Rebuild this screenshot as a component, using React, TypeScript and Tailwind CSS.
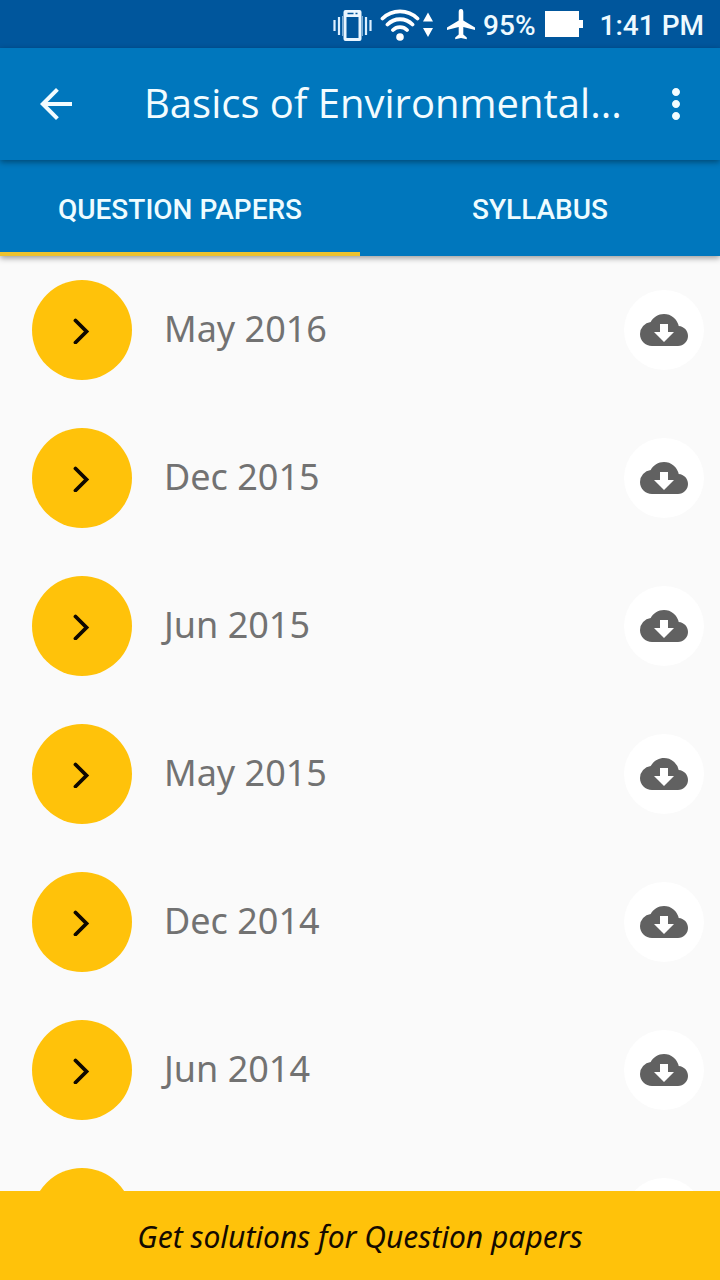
import { useState } from "react";
import { MdArrowBack, MdCloudDownload, MdMoreVert } from "react-icons/md";

const papers = [
  { id: 1, title: "May 2016" },
  { id: 2, title: "Dec 2015" },
  { id: 3, title: "Jun 2015" },
  { id: 4, title: "May 2015" },
  { id: 5, title: "Dec 2014" },
  { id: 6, title: "Jun 2014" },
  { id: 7, title: "" },
];

const tabs = ["QUESTION PAPERS", "SYLLABUS"];

function VibrateIcon() {
  return (
    <svg width="39" height="36" viewBox="0 0 39 36" aria-hidden="true">
      <path d="M1.500 14v11M6 11v18M33 11v18M37.500 14v11" stroke="#dcefff" strokeWidth="2.200" />
      <path d="M9.500 10v20M29.500 10v20" stroke="#7fb0d8" strokeWidth="1" />
      <rect x="12" y="5.500" width="15" height="28" rx="0.500" fill="none" stroke="#eaf6ff" strokeWidth="3" />
      <path d="M12 8h15" stroke="#eaf6ff" strokeWidth="6" />
      <path d="M14.500 7.500h6M22.500 7.500h2" stroke="#00569c" strokeWidth="1.500" />
    </svg>
  );
}

function WifiIcon() {
  return (
    <svg width="55" height="36" viewBox="0 0 55 36" fill="none" stroke="#fff" aria-hidden="true">
      <path
        d="M2.500 12.500a25 25 0 0 1 35 0M7.500 18.500a17.500 17.500 0 0 1 25 0M13 24a10 10 0 0 1 14 0"
        strokeWidth="3.800"
        strokeLinecap="round"
      />
      <circle cx="20" cy="31" r="3.800" fill="#fff" stroke="none" />
      <path d="M48 6.500l5 9H43zM48 31l5-9H43z" fill="#fff" stroke="none" />
    </svg>
  );
}

function PlaneIcon() {
  return (
    <svg width="28" height="36" viewBox="0 0 28 36" fill="#fff" aria-hidden="true">
      <path d="M14 3c1.600 0 2.300 1.200 2.300 3v8.500L28 21.500v2.500l-11.700-3v7.500l3.500 3v1.800L14 32l-5.800 1.300v-1.800l3.500-3V21L0 24v-2.500l11.700-7V6c0-1.800.7-3 2.300-3z" />
    </svg>
  );
}

function StatusBar() {
  return (
    <div className="flex h-12 shrink-0 items-center justify-end bg-[#00569c] pr-4 font-[Roboto,sans-serif] text-[28px] font-medium text-[#eefaff]">
      <VibrateIcon />
      <span className="ml-2">
        <WifiIcon />
      </span>
      <span className="ml-3">
        <PlaneIcon />
      </span>
      <span className="ml-2 pt-1">95%</span>
      <svg className="ml-2" width="40" height="28" viewBox="0 0 40 28" fill="#fff" aria-hidden="true">
        <path d="M1 1h34v9h4v8h-4v9H1z" />
      </svg>
      <span className="ml-4 pt-1">1:41 PM</span>
    </div>
  );
}

function PaperRow({ title }: { title: string }) {
  return (
    <li className="flex items-center py-6 pr-4 pl-8">
      <button
        aria-label={`Open ${title}`}
        className="flex size-[100px] shrink-0 items-center justify-center rounded-full bg-[#ffc20a]"
      >
        <svg width="20" height="28" viewBox="0 0 20 28" fill="none" aria-hidden="true">
          <path d="M3.500 4.500L14.500 15.500L3.500 26.500" stroke="#0f0800" strokeWidth="3.800" strokeLinecap="round" />
        </svg>
      </button>
      <span className="ml-8 flex-1 pb-0.5 text-4xl text-[#727272]">{title}</span>
      <button
        aria-label={`Download ${title}`}
        className="flex size-20 shrink-0 items-center justify-center rounded-full bg-white"
      >
        <MdCloudDownload className="size-12 text-[#616161]" />
      </button>
    </li>
  );
}

export default function App() {
  const [active, setActive] = useState(0);

  return (
    <div className="flex h-screen flex-col bg-[#fafafa] font-['Noto_Sans',sans-serif]">
      <StatusBar />

      <header className="z-20 flex h-28 shrink-0 items-center bg-[#0077bd] px-8 text-[#f2fcff] shadow-[0_2px_6px_rgba(0,0,0,0.4)]">
        <button aria-label="Back">
          <MdArrowBack className="size-12" />
        </button>
        <h1 className="ml-16 min-w-0 flex-1 truncate pb-0.5 font-['Open_Sans',sans-serif] text-[40px]">
          Basics of Environmental...
        </h1>
        <button aria-label="More options" className="-mr-3">
          <MdMoreVert className="size-12" />
        </button>
      </header>

      <nav className="z-10 flex h-24 shrink-0 bg-[#0077bd] font-[Roboto,sans-serif] shadow-[0_2px_6px_rgba(0,0,0,0.4)]">
        {tabs.map((tab, i) => (
          <button
            key={tab}
            onClick={() => setActive(i)}
            className={`flex-1 border-b-4 pt-2 text-[28px] font-medium text-[#eefcff] ${
              active === i ? "border-[#edc22e]" : "border-transparent"
            }`}
          >
            {tab}
          </button>
        ))}
      </nav>

      <main className="min-h-0 flex-1 overflow-hidden">
        <ul>
          {papers.map((paper) => (
            <PaperRow key={paper.id} title={paper.title} />
          ))}
        </ul>
      </main>

      <button className="h-[89px] shrink-0 bg-[#ffc20a] pt-0.5 text-[30px] text-[#140a00] italic">
        Get solutions for Question papers
      </button>
    </div>
  );
}
